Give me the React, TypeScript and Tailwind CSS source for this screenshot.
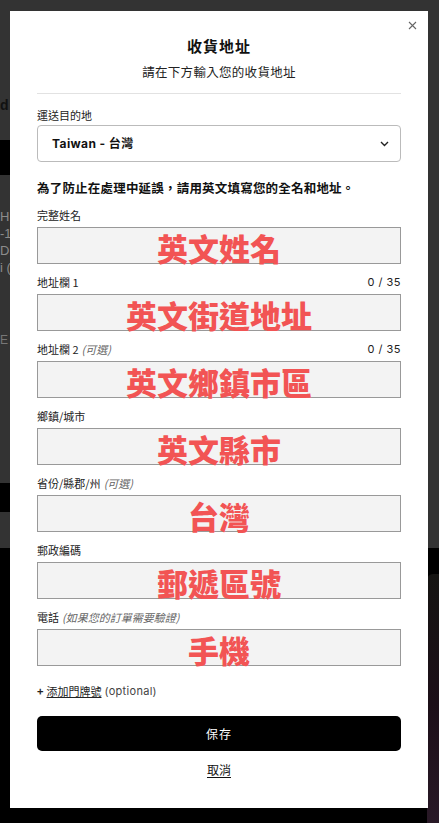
import React from "react";

const CJK = '"Noto Sans CJK TC", "Noto Sans", sans-serif';
const LAT = 'Inter, "Noto Sans CJK TC", sans-serif';
const LIB = '"Liberation Sans", sans-serif';

function Field({
  label,
  optional,
  counter,
  value,
}: {
  label: string;
  optional?: string;
  counter?: boolean;
  value: string;
}) {
  return (
    <div className="mt-[10px] flex flex-col">
      <div className="flex h-[16px] items-center justify-between text-[11px] leading-[16px] text-[#222]">
        <span>
          {label}
          {optional && <span className="ml-[3px] italic text-[#666]">{optional}</span>}
        </span>
        {counter && (
          <span className="text-[11px] tracking-[0.5px]" style={{ fontFamily: LAT }}>
            0 / 35
          </span>
        )}
      </div>
      <div className="mt-[4px] flex h-[37px] items-center justify-center overflow-visible border border-[#999] bg-[#f3f3f3]">
        <span className="mt-[4px] text-[31px] font-black leading-[31px] text-[#f25454]">{value}</span>
      </div>
    </div>
  );
}

export default function App() {
  return (
    <div className="relative h-[823px] w-[439px] overflow-hidden" style={{ fontFamily: CJK }}>
      {/* background page (dimmed) */}
      <div className="flex h-full flex-col">
        <div className="flex h-[548px] shrink-0 flex-col bg-[#333]">
          <div className="h-[96px] shrink-0" />
          <div className="h-[18px] shrink-0 overflow-hidden text-[14px] font-bold leading-[18px] text-[#111]" style={{ fontFamily: LIB }}>
            d
          </div>
          <div className="h-[26px] shrink-0" />
          <div className="h-[35px] w-[200px] shrink-0 bg-black" />
          <div className="h-[33px] shrink-0" />
          <div className="flex h-[68px] shrink-0 flex-col overflow-hidden text-[13px] leading-[17px] text-[#8c8c8c]" style={{ fontFamily: LIB }}>
            <span className="h-[17px]">HS</span>
            <span className="h-[17px]">-1I</span>
            <span className="h-[17px]">Di</span>
            <span className="h-[17px]">i (</span>
          </div>
          <div className="h-[57px] shrink-0" />
          <div className="h-[14px] shrink-0 overflow-hidden text-[12px] leading-[14px] text-[#777]" style={{ fontFamily: LIB }}>
            E
          </div>
          <div className="h-[136px] shrink-0" />
          <div className="h-[29px] w-[200px] shrink-0 bg-black" />
        </div>
        <div className="flex flex-1 bg-black">
          <div className="ml-auto mt-[26px] h-[260px] w-[12px] rounded-tl-[6px] bg-gradient-to-b from-[#151412] via-[#1c0f18] to-[#2a1a28]" />
        </div>
      </div>

      {/* modal */}
      <div className="absolute left-[10px] top-[11px] flex h-[797px] w-[418px] flex-col bg-white px-[27px] pt-[25px]">
        <button className="absolute right-[10px] top-[8px] flex h-[12px] w-[12px] items-center justify-center text-[#666]">
          <svg width="9" height="9" viewBox="0 0 9 9" fill="none" stroke="currentColor" strokeWidth="1.1">
            <path d="M1 1l7 7M8 1L1 8" />
          </svg>
        </button>
        <div className="text-center text-[15px] font-bold leading-[20px] tracking-[1px] text-[#111]">收貨地址</div>
        <div className="mt-[6px] text-center text-[12.5px] leading-[20px] tracking-[0.3px] text-[#222]">請在下方輸入您的收貨地址</div>
        <div className="mt-[11px] h-px bg-[#e2e2e2]" />
        <div className="mt-[13px] text-[11px] leading-[16px] text-[#222]">運送目的地</div>
        <div className="mt-[2px] flex h-[37px] items-center justify-between rounded-[4px] border border-[#bbb] pl-[14px] pr-[11px]">
          <span className="text-[12px] font-bold tracking-[0.4px] text-[#111]" style={{ fontFamily: LAT }}>
            Taiwan - 台灣
          </span>
          <svg width="9" height="6" viewBox="0 0 9 6" fill="none" stroke="#222" strokeWidth="1.4">
            <path d="M1 1l3.5 3.5L8 1" />
          </svg>
        </div>
        <div className="mt-[17px] text-[12.5px] font-bold leading-[18px] tracking-[0.2px] text-[#111]">
          為了防止在處理中延誤，請用英文填寫您的全名和地址。
        </div>
        <Field label="完整姓名" value="英文姓名" />
        <Field label="地址欄 1" counter value="英文街道地址" />
        <Field label="地址欄 2" optional="(可選)" counter value="英文鄉鎮市區" />
        <Field label="鄉鎮/城市" value="英文縣市" />
        <Field label="省份/縣郡/州" optional="(可選)" value="台灣" />
        <Field label="郵政編碼" value="郵遞區號" />
        <Field label="電話" optional="(如果您的訂單需要驗證)" value="手機" />
        <div className="mt-[17px] flex items-center text-[11px] leading-[16px] text-[#222]">
          <span className="mr-[3px] font-bold">+</span>
          <span className="underline">添加門牌號</span>
          <span className="ml-[3px] tracking-[0.3px] text-[#444]" style={{ fontFamily: LAT }}>
            (optional)
          </span>
        </div>
        <button className="mt-[17px] flex h-[35px] items-center justify-center rounded-[5px] bg-black text-[12px] tracking-[1px] text-white">
          保存
        </button>
        <div className="mt-[11px] text-center text-[12px] leading-[16px] text-[#111]">
          <span className="underline underline-offset-2">取消</span>
        </div>
      </div>
    </div>
  );
}
